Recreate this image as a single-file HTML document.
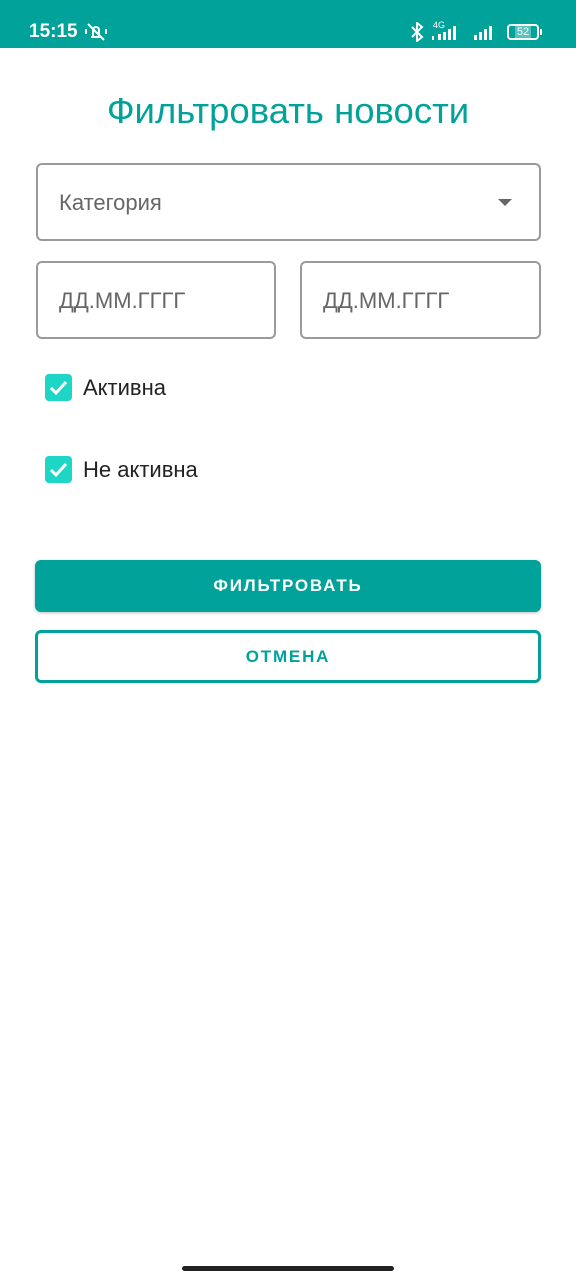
<!DOCTYPE html>
<html><head><meta charset="utf-8"><style>
*{margin:0;padding:0;box-sizing:border-box}
body{width:576px;height:1280px;background:#fff;font-family:"Liberation Sans",sans-serif;position:relative;overflow:hidden}
.a{position:absolute}
.sb{left:0;top:0;width:576px;height:48px;background:#00A29A;color:#fff}
.box{border:2px solid #9a9a9a;border-radius:6px}
.ph{font-size:22px;color:#666}
.cb{width:27px;height:27px;background:#1ED6C6;border-radius:4px}
.lbl{font-size:22px;color:#222}
</style></head><body>
<div class="a sb">
<div class="a" style="left:29px;top:21px;font-size:19px;font-weight:bold">15:15</div>
<svg class="a" style="left:85px;top:21px" width="22" height="22" viewBox="0 0 22 22" fill="none" stroke="#fff" stroke-width="2"><path d="M6 16h10M8 16V9a3 3 0 016 0v7M3 3l16 16M1 8v5M21 8v5"/></svg>
<svg class="a" style="left:410px;top:22px" width="14" height="20" viewBox="0 0 14 20" fill="none" stroke="#fff" stroke-width="2"><path d="M2 5l10 10-5 4V1l5 4L2 15"/></svg>
<div class="a" style="left:433px;top:20px;font-size:9px">4G</div>
<svg class="a" style="left:432px;top:24px" width="70" height="18" viewBox="0 0 70 18" fill="#fff"><rect x="0" y="12" width="2" height="4"/><rect x="6" y="10" width="3" height="6"/><rect x="11" y="8" width="3" height="8"/><rect x="16" y="5" width="3" height="11"/><rect x="21" y="2" width="3" height="14"/><rect x="42" y="11" width="3" height="5"/><rect x="47" y="8" width="3" height="8"/><rect x="52" y="5" width="3" height="11"/><rect x="57" y="2" width="3" height="14"/></svg>
<div class="a" style="left:507px;top:24px;width:32px;height:16px;border:2px solid #fff;border-radius:4px;font-size:11px;text-align:center;line-height:12px"><span style="display:inline-block;background:rgba(255,255,255,.35);padding:0 2px">52</span></div>
<div class="a" style="left:540px;top:29px;width:2px;height:6px;background:#fff"></div>
</div>
<div class="a" style="left:0;top:90px;width:576px;text-align:center;font-size:36.5px;color:#00A29A">Фильтровать новости</div>
<div class="a box" style="left:36px;top:163px;width:505px;height:78px"></div>
<div class="a ph" style="left:59px;top:190px">Категория</div>
<div class="a" style="left:498px;top:199px;width:0;height:0;border-left:7px solid transparent;border-right:7px solid transparent;border-top:7px solid #666"></div>
<div class="a box" style="left:36px;top:261px;width:240px;height:78px"></div>
<div class="a ph" style="left:59px;top:288px">ДД.ММ.ГГГГ</div>
<div class="a box" style="left:300px;top:261px;width:241px;height:78px"></div>
<div class="a ph" style="left:323px;top:288px">ДД.ММ.ГГГГ</div>
<div class="a cb" style="left:45px;top:374px"></div>
<svg class="a" style="left:45px;top:374px" width="27" height="27" viewBox="0 0 27 27" fill="none" stroke="#fff" stroke-width="3"><path d="M6 14l5 5 10-11"/></svg>
<div class="a lbl" style="left:83px;top:375px">Активна</div>
<div class="a cb" style="left:45px;top:456px"></div>
<svg class="a" style="left:45px;top:456px" width="27" height="27" viewBox="0 0 27 27" fill="none" stroke="#fff" stroke-width="3"><path d="M6 14l5 5 10-11"/></svg>
<div class="a lbl" style="left:83px;top:457px">Не активна</div>
<div class="a" style="left:35px;top:560px;width:506px;height:52px;background:#00A29A;border-radius:6px;box-shadow:0 1px 3px rgba(0,0,0,.25);color:#fff;font-weight:bold;font-size:17px;letter-spacing:1.8px;text-align:center;line-height:52px">ФИЛЬТРОВАТЬ</div>
<div class="a" style="left:35px;top:630px;width:506px;height:53px;border:3px solid #00A29A;border-radius:6px;color:#00A29A;font-weight:bold;font-size:17px;letter-spacing:1.8px;text-align:center;line-height:47px">ОТМЕНА</div>
<div class="a" style="left:182px;top:1266px;width:212px;height:5px;background:#222;border-radius:3px"></div>
</body></html>
